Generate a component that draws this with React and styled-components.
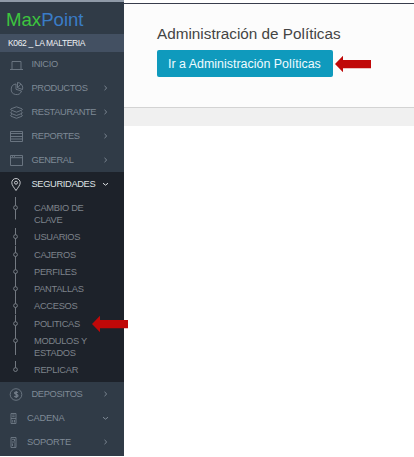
import React from "react";
import styled, { createGlobalStyle } from "styled-components";

const Global = createGlobalStyle`
  * { box-sizing: border-box; }
  body { margin: 0; background: #fff; font-family: "Liberation Sans", Arial, sans-serif; }
`;
const Page = styled.div`
  display: flex;
  width: 414px;
  height: 457px;
  overflow: hidden;
  background: #fff;
`;
const Sidebar = styled.nav`
  width: 124px;
  height: 456px;
  flex: none;
  background: #303b47;
  border-top: 2px solid #8f9aa8;
`;
const Brand = styled.div`
  height: 32px;
  padding: 6px 0 0 6px;
  font-size: 18.6px;
  line-height: 24px;
  color: #3a7cc6;
`;
const BrandAccent = styled.span`
  color: #3dc53f;
`;
const Store = styled.div`
  height: 18px;
  padding-left: 8px;
  background: #435062;
  color: #eef1f4;
  font-size: 8.5px;
  line-height: 18px;
  letter-spacing: -0.35px;
  white-space: pre;
`;
const Item = styled.div`
  display: flex;
  align-items: center;
  height: 24px;
  padding-left: 9px;
  color: ${(p) => (p.$active ? "#dfe2e5" : "#7f8a96")};
`;
const IconSlot = styled.span`
  display: flex;
  width: ${(p) => (p.$narrow ? 18 : 22.5)}px;
  flex: none;
  opacity: ${(p) => (p.$bright ? 1 : 0.85)};
`;
const Label = styled.span`
  width: ${(p) => (p.$narrow ? 76 : 71.5)}px;
  flex: none;
  font-size: 9.3px;
  line-height: 12px;
  letter-spacing: ${(p) => (p.$narrow ? -0.2 : -0.35)}px;
  white-space: nowrap;
`;
const Group = styled.div`
  height: 210px;
  background: #1d222a;
`;
const SubList = styled.div`
  padding-top: 3px;
`;
const SubItem = styled.div`
  display: flex;
  height: ${(p) => (p.$double ? 29.3 : 17.3)}px;
  padding-left: 12px;
  color: #7d838b;
`;
const SubLabel = styled.span`
  padding: 3px 0 0 15px;
  font-size: 9.3px;
  line-height: 12px;
  letter-spacing: -0.3px;
  white-space: pre;
`;
const NodeSvg = styled.svg`
  flex: none;
  overflow: visible;
`;
const ArrowOverlay = styled.span`
  position: absolute;
  left: 92px;
  top: 315px;
  display: flex;
`;
const Main = styled.main`
  flex: 1;
  padding-top: 3px;
  background: #fff;
`;
const Panel = styled.section`
  height: 105px;
  padding: 21px 0 0 33px;
  background: #fcfcfc;
  border-top: 1px solid #383d4c;
  border-bottom: 1px solid #d3d3d3;
`;
const Title = styled.h1`
  margin: 0;
  height: 25px;
  font-size: 15.3px;
  font-weight: 400;
  line-height: 18px;
  color: #444;
  white-space: nowrap;
`;
const Action = styled.div`
  display: flex;
  align-items: center;
  gap: 2px;
`;
const Button = styled.button`
  width: 176px;
  height: 27px;
  padding: 1px 0 0 11px;
  border: 0;
  border-radius: 2px;
  background: #0f9abd;
  color: #eefbff;
  font: 12.45px/26px "Liberation Sans", Arial, sans-serif;
  text-align: left;
  white-space: nowrap;
`;
const Strip = styled.div`
  height: 18px;
  background: #f0f0f0;
`;

const drawings = {
  laptop: <path d="M3 12V4.500h9V12M1 12.500h13" />,
  pie: <path d="M7 3a5.300 5.300 0 1 0 5.500 7L7 8.300zM8.500 1.500v5.300l5 1.700A5.400 5.400 0 0 0 8.500 1.500zM8.500 6.800l3.500-3.800" />,
  layers: <path d="M7.500 1.800l5.500 2q1 .6 0 1.200l-5.500 2.200L2 5q-1-.6 0-1.200zM3 6.700l-1 .5q-1 .6 0 1.200l5.500 2.100L13 8.400q1-.6 0-1.200l-1-.5M3 9.500l-1 .5q-1 .6 0 1.200l5.500 2.100 5.500-2.100q1-.6 0-1.200l-1-.5" />,
  server: <><path d="M1.500 2.500h12v10h-12z" /><path d="M1.500 4.500h12M1.500 7.500h12M1.500 10h12" /></>,
  window: <path d="M1.500 2.500h12v10h-12zM1.500 4.700h12M3 3.600h1M5 3.600h1" />,
  pin: <><path d="M7 13.500C5 10.500 2.800 8.200 2.800 5.700a4.200 4.200 0 0 1 8.400 0c0 2.500-2.200 4.800-4.200 7.800z" /><circle cx="7" cy="5.700" r="1.500" /></>,
  dollar: <><circle cx="7" cy="7.500" r="5.800" /><path d="M8.800 5.700c-.5-1-3.300-1-3.300.4 0 1.500 3.500.9 3.500 2.600 0 1.500-3 1.600-3.700.3M7.200 4v7" strokeWidth="1.200" /></>,
  code: <path d="M2 2.500h5v10H2zM3.200 4h2.500M3.200 5.700h2.500M2 7.500h5M3.700 9v2.500M5.500 9v2.500" />,
  codeAlt: <path d="M2 2.500h5v10H2zM3 4.300h2M5.500 4v2M3 7h3M3.500 8.500v2.500M5 9h1.500M5 11h1.500" />,
};
const Icon = ({ name }) => (
  <svg width="15" height="15" viewBox="0 0 15 15" fill="none" stroke="currentColor" strokeWidth="0.85">
    {drawings[name]}
  </svg>
);
const Chevron = ({ down }) => (
  <svg width="8" height="8" viewBox="0 0 8 8" fill="none" stroke="currentColor" strokeWidth="1">
    <path d={down ? "M0 3.200l2.500 2L5 3.200" : "M1.500 1.900L3.700 4 1.500 6.100"} />
  </svg>
);
const RedArrow = () => (
  <svg width="36" height="18" viewBox="0 0 36 18">
    <path d="M0 9l8-8.300V5h28v8.200H8v4.100z" fill="#c00808" />
  </svg>
);
const Node = ({ height, from, to }) => (
  <NodeSvg width="7" height={height} viewBox={`0 0 7 ${height}`} fill="none" stroke="#7d838b" strokeWidth="0.9">
    <path d={`M3.500 ${from}V6.800M3.500 10.400V${to}`} />
    <circle cx="3.500" cy="8.600" r="1.900" />
  </NodeSvg>
);
const Entry = ({ icon, text, down, plain, narrow, active }) => (
  <Item $active={active}>
    <IconSlot $narrow={narrow} $bright={active}><Icon name={icon} /></IconSlot>
    <Label $narrow={narrow}>{text}</Label>
    {!plain && <Chevron down={down} />}
  </Item>
);

const subItems = [
  { text: "CAMBIO DE\nCLAVE", double: true, from: -2, to: 20.5 },
  { text: "USUARIOS" },
  { text: "CAJEROS" },
  { text: "PERFILES" },
  { text: "PANTALLAS" },
  { text: "ACCESOS" },
  { text: "POLITICAS" },
  { text: "MODULOS Y\nESTADOS", double: true, to: 23 },
  { text: "REPLICAR", to: 10.5 },
];

export default function App() {
  return (
    <Page>
      <Global />
      <Sidebar>
        <Brand><BrandAccent>Max</BrandAccent>Point</Brand>
        <Store>K062 _ LA MALTERIA</Store>
        <Entry icon="laptop" text="INICIO" plain />
        <Entry icon="pie" text="PRODUCTOS" />
        <Entry icon="layers" text="RESTAURANTE" />
        <Entry icon="server" text="REPORTES" />
        <Entry icon="window" text="GENERAL" />
        <Group>
          <Entry icon="pin" text="SEGURIDADES" down active />
          <SubList>
            {subItems.map((s) => {
              const h = s.double ? 29.3 : 17.3;
              return (
                <SubItem key={s.text} $double={s.double}>
                  <Node height={h} from={s.from ?? 0} to={s.to ?? h} />
                  <SubLabel>{s.text}</SubLabel>
                </SubItem>
              );
            })}
          </SubList>
        </Group>
        <Entry icon="dollar" text="DEPOSITOS" />
        <Entry icon="code" text="CADENA" narrow down />
        <Entry icon="codeAlt" text="SOPORTE" narrow />
      </Sidebar>
      <Main>
        <Panel>
          <Title>Administración de Políticas</Title>
          <Action>
            <Button>Ir a Administración Políticas</Button>
            <RedArrow />
          </Action>
        </Panel>
        <Strip />
      </Main>
      <ArrowOverlay><RedArrow /></ArrowOverlay>
    </Page>
  );
}
